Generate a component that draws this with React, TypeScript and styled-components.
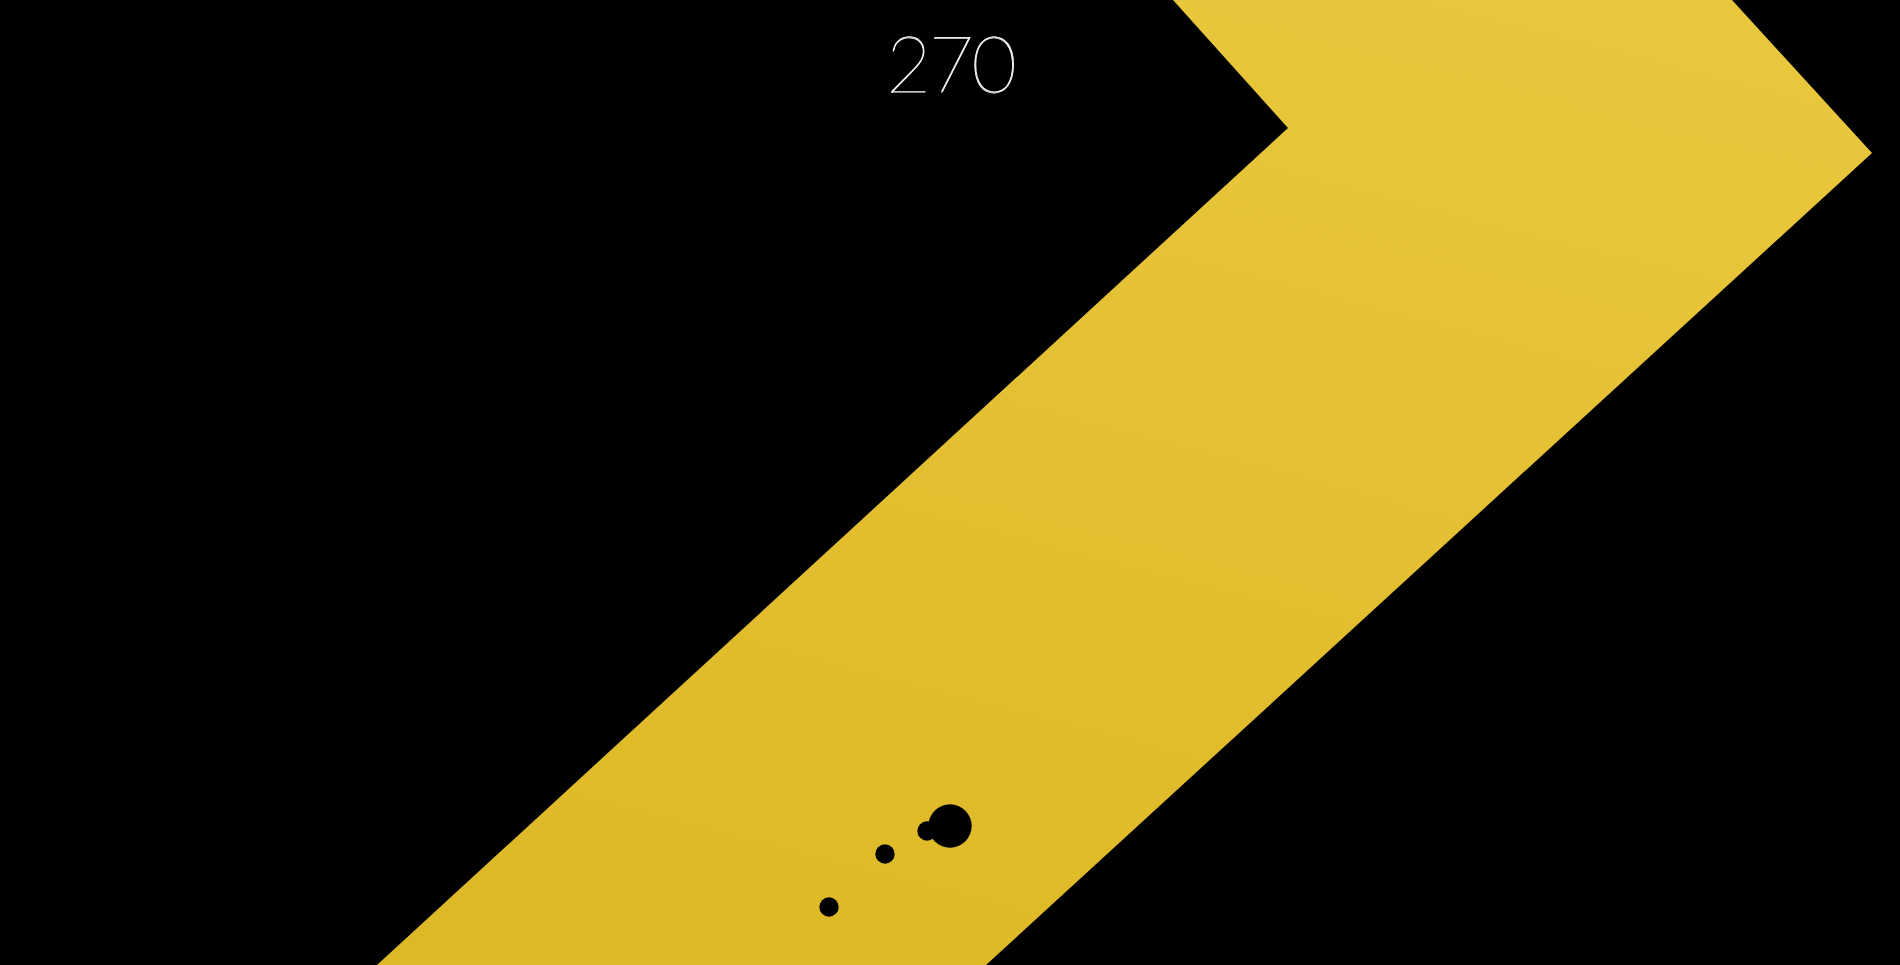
import React from "react";
import styled, { createGlobalStyle } from "styled-components";

const Global = createGlobalStyle`
  html, body { margin: 0; padding: 0; background: #000; overflow: hidden; }
  #root { width: 1900px; height: 965px; }
`;

const Stage = styled.main`
  position: relative;
  width: 1900px;
  height: 965px;
  background: #000;
  overflow: hidden;
`;

const Board = styled.svg`
  position: absolute;
  inset: 0;
  width: 1900px;
  height: 965px;
`;

const Hud = styled.header`
  position: relative;
  display: flex;
  justify-content: center;
  padding-top: 23px;
`;

const Score = styled.div`
  font-family: Lato, Inter, sans-serif;
  font-weight: 100;
  font-size: 78px;
  line-height: 1;
  color: #f2f2f2;
  letter-spacing: -2.5px;
  text-shadow: 0.6px 0 0 #f2f2f2, 0 0.5px 0 #f2f2f2;
`;

const trail = [
  { x: 829, y: 907, r: 9.7 },
  { x: 885, y: 854, r: 9.7 },
  { x: 927, y: 831, r: 9.7 },
  { x: 950, y: 826, r: 21.7 },
];

export default function App() {
  return (
    <Stage>
      <Global />
      <Board viewBox="0 0 1900 965">
        <defs>
          <linearGradient id="track" x1="0.7" y1="0" x2="0.3" y2="1">
            <stop offset="0" stopColor="#E9C73C" />
            <stop offset="1" stopColor="#DEB927" />
          </linearGradient>
        </defs>
        <polygon
          points="1173,0 1732,0 1872,153 986,965 377,965 1288,128"
          fill="url(#track)"
        />
        {trail.map((d, i) => (
          <circle key={i} cx={d.x} cy={d.y} r={d.r} fill="#000" />
        ))}
      </Board>
      <Hud>
        <Score>270</Score>
      </Hud>
    </Stage>
  );
}
